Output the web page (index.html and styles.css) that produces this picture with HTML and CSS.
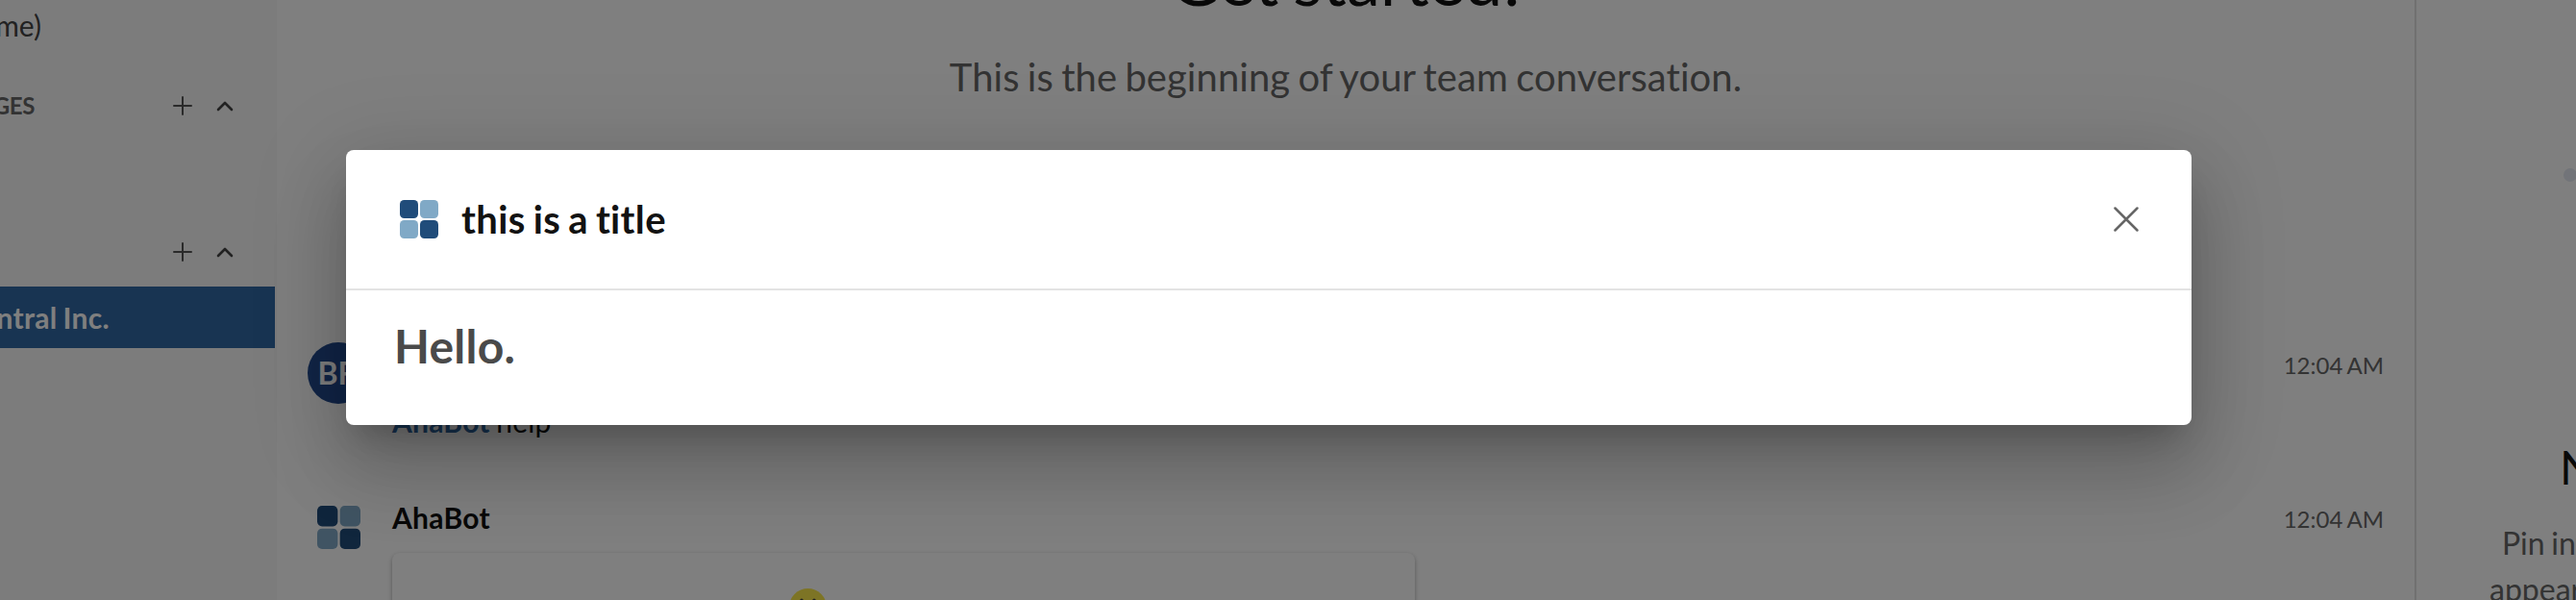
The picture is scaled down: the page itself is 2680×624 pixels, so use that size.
FILE: index.html
```html
<!DOCTYPE html>
<html lang="en">
<head>
<meta charset="utf-8">
<title>Conversation</title>
<link rel="stylesheet" href="styles.css">
</head>
<body>
<div class="app">
  <aside class="sidebar">
    <div class="nav-item"><span>(me)</span></div>
    <div class="section section-first">
      <span class="section-title"><span>DIRECT MESSAGES</span></span>
      <svg class="icon-plus" viewBox="0 0 20 20"><path d="M10 1v18M1 10h18"/></svg>
      <svg class="icon-chevron" viewBox="0 0 18 12"><path d="M2 10l7-7 7 7"/></svg>
    </div>
    <div class="section section-second">
      <span class="section-title"></span>
      <svg class="icon-plus" viewBox="0 0 20 20"><path d="M10 1v18M1 10h18"/></svg>
      <svg class="icon-chevron" viewBox="0 0 18 12"><path d="M2 10l7-7 7 7"/></svg>
    </div>
    <div class="nav-selected"><span>RingCentral Inc.</span></div>
  </aside>
  <main class="conversation">
    <h1 class="intro-title">Get started!</h1>
    <p class="intro-text">This is the beginning of your team conversation.</p>
    <article class="message message-user">
      <div class="avatar">BF</div>
      <div class="message-body">
        <div class="message-head"><span class="author"></span><time>12:04 AM</time></div>
        <p class="message-text"><b>AhaBot</b> help</p>
      </div>
    </article>
    <article class="message message-bot">
      <svg class="bot-logo" viewBox="0 0 40 40">
        <rect class="dark" width="19" height="19" rx="4.5"/><rect class="light" x="21" width="19" height="19" rx="4.5"/>
        <rect class="light" y="21" width="19" height="19" rx="4.5"/><rect class="dark" x="21" y="21" width="19" height="19" rx="4.5"/>
      </svg>
      <div class="message-body">
        <div class="message-head"><span class="author">AhaBot</span><time>12:04 AM</time></div>
        <div class="card">
          <svg class="emoji" viewBox="0 0 39 39"><circle cx="19.5" cy="19.5" r="19.5"/><ellipse class="eye" cx="13" cy="13.5" rx="2" ry="3"/><ellipse class="eye" cx="26" cy="13.5" rx="2" ry="3"/></svg>
        </div>
      </div>
    </article>
  </main>
  <aside class="details">
    <span class="dot"></span>
    <h2 class="details-title">No pinned items</h2>
    <p class="details-text">Pin information</p>
    <p class="details-text details-text-next">appear here</p>
  </aside>
</div>
<div class="overlay">
  <section class="modal">
    <header class="modal-head">
      <svg class="modal-logo" viewBox="0 0 40 40">
        <rect class="dark" width="19" height="19" rx="4.5"/><rect class="light" x="21" width="19" height="19" rx="4.5"/>
        <rect class="light" y="21" width="19" height="19" rx="4.5"/><rect class="dark" x="21" y="21" width="19" height="19" rx="4.5"/>
      </svg>
      <h2 class="modal-title">this is a title</h2>
      <svg class="icon-close" viewBox="0 0 26 26"><path d="M1.5 1.5l23 23M24.5 1.5l-23 23"/></svg>
    </header>
    <div class="modal-body">Hello.</div>
  </section>
</div>
</body>
</html>
```

FILE: styles.css
```css
* { box-sizing: border-box; }
html, body { margin: 0; height: 624px; overflow: hidden; }
body { position: relative; font-family: Lato, sans-serif; font-variant-ligatures: none; background: #fff; color: #121212; }
h1, h2, p { margin: 0; font-weight: 400; white-space: nowrap; }
h1, h2, p, time, .nav-selected { word-spacing: -0.05em; }
svg { display: block; flex: none; }
.app { display: flex; width: 2680px; height: 624px; overflow: hidden; }

.sidebar { width: 288px; flex: none; background: #f9f9f9; }
.nav-item { width: 43px; height: 52px; display: flex; justify-content: flex-end; font-size: 30px; line-height: 52px; color: #444; }
.section { display: flex; align-items: center; height: 40px; }
.section-first { margin-top: 38px; }
.section-second { margin-top: 112px; }
.section-title { width: 36px; margin-right: 144px; display: flex; justify-content: flex-end; flex: none; font-size: 24px; font-weight: 700; line-height: 40px; letter-spacing: -0.4px; color: #666; white-space: nowrap; }
.icon-plus { width: 20px; height: 20px; }
.icon-chevron { width: 18px; height: 12px; margin-left: 25px; }
.icon-plus path, .icon-chevron path { fill: none; stroke: #555; stroke-width: 2; stroke-linecap: round; stroke-linejoin: round; }
.icon-chevron path { stroke-width: 2.6; stroke: #444; }
.nav-selected { width: 286px; height: 64px; margin-top: 16px; padding-right: 172px; display: flex; justify-content: flex-end; background: #3069a4; color: #fff; font-size: 30px; font-weight: 700; line-height: 64px; letter-spacing: 0.3px; white-space: nowrap; }

.conversation { width: 2226px; flex: none; border-right: 2px solid #e0e0e0; }
.intro-title { height: 60px; margin-top: -51px; font-size: 70px; line-height: 60px; letter-spacing: 0.2px; text-align: center; }
.intro-text { height: 60px; margin-top: 41px; font-size: 40px; line-height: 60px; letter-spacing: 0.05px; text-align: center; color: #666; }
.message { display: flex; }
.message-user { margin-top: 246px; padding-left: 32px; height: 159px; }
.avatar { width: 64px; height: 64px; flex: none; padding-right: 4px; border-radius: 50%; background: #224b8e; color: #fff; font-size: 32px; font-weight: 700; line-height: 64px; text-align: center; }
.message-body { flex: 1; margin-left: 24px; padding-right: 32px; }
.message-head { display: flex; justify-content: space-between; align-items: center; height: 46px; }
.author { font-size: 30px; font-weight: 700; letter-spacing: 0.3px; }
time { font-size: 24px; color: #666; }
.message-text { font-size: 30px; line-height: 48px; letter-spacing: 0.25px; margin-top: 12px; }
.message-text b { color: #3069a4; }
.message-bot { padding-left: 42px; }
.message-bot time { padding-top: 2px; }
.bot-logo { width: 45px; height: 45px; margin-top: 11px; }
.message-bot .message-body { margin-left: 33px; }
.dark { fill: #204c7a; }
.light { fill: #80a9c6; }
.card { width: 1064px; height: 200px; margin-top: 14px; padding: 37px 0 0 413px; border-radius: 8px; background: #fff; box-shadow: 0 2px 5px rgba(0,0,0,.32); }
.emoji { width: 39px; height: 39px; fill: #fbe94a; }
.eye { fill: #444; }

.details { width: 166px; flex: none; overflow: hidden; }
.dot { display: block; width: 14px; height: 14px; margin: 175px 0 0 153px; border-radius: 50%; background: #e4e8f2; }
.details-title { margin: 267px 0 0 149px; font-size: 48px; line-height: 60px; }
.details-text { margin: 25px 0 0 89px; font-size: 32px; line-height: 48px; color: #666; }
.details-text-next { margin: 0 0 0 76px; }

.overlay { position: absolute; inset: 0; padding: 156px 0 0 360px; background: rgba(0,0,0,.5); overflow: hidden; }
.modal { width: 1920px; height: 286px; border-radius: 8px; background: #fff; box-shadow: 0 22px 30px -14px rgba(0,0,0,.2), 0 48px 76px 6px rgba(0,0,0,.14), 0 18px 92px 16px rgba(0,0,0,.12); }
.modal-head { display: flex; align-items: center; height: 146px; padding: 0 55px 0 56px; border-bottom: 2px solid #e3e3e3; }
.modal-logo { width: 40px; height: 40px; }
.modal-title { flex: 1; margin-left: 24px; font-size: 40px; font-weight: 700; line-height: 60px; letter-spacing: 0.35px; }
.icon-close { width: 26px; height: 26px; }
.icon-close path { fill: none; stroke: #666; stroke-width: 2.5; stroke-linecap: round; }
.modal-body { padding: 28px 50px; font-size: 48px; font-weight: 700; line-height: 60px; letter-spacing: 0.25px; color: #4a4a4a; }
```
